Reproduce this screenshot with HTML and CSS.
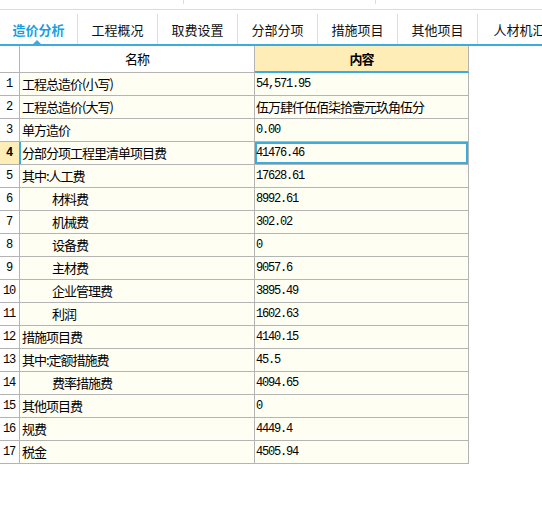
FILE: index.html
```html
<!DOCTYPE html>
<html lang="zh-CN">
<head>
<meta charset="utf-8">
<title>造价分析</title>
<link rel="stylesheet" href="styles.css">
</head>
<body>
<div class="topbar">
  <div class="tick tick-a"></div>
  <div class="tick tick-b"></div>
</div>
<nav class="tabs">
  <div class="tab tab-first active">造价分析</div>
  <div class="tab">工程概况</div>
  <div class="tab">取费设置</div>
  <div class="tab">分部分项</div>
  <div class="tab">措施项目</div>
  <div class="tab">其他项目</div>
  <div class="tab tab-last">人材机汇总</div>
</nav>
<div class="grid">
  <div class="cell hd hd-no"></div>
  <div class="cell hd hd-name">名称</div>
  <div class="cell hd hd-val">内容</div>

  <div class="cell no num">1</div><div class="cell name">工程总造价(小写)</div><div class="cell val num">54,571.95</div>
  <div class="cell no num">2</div><div class="cell name">工程总造价(大写)</div><div class="cell val">伍万肆仟伍佰柒拾壹元玖角伍分</div>
  <div class="cell no num">3</div><div class="cell name">单方造价</div><div class="cell val num">0.00</div>
  <div class="cell no num sel-no">4</div><div class="cell name sel-name">分部分项工程里清单项目费</div><div class="cell val num sel-val">41476.46</div>
  <div class="cell no num">5</div><div class="cell name">其中:人工费</div><div class="cell val num">17628.61</div>
  <div class="cell no num">6</div><div class="cell name indent">材料费</div><div class="cell val num">8992.61</div>
  <div class="cell no num">7</div><div class="cell name indent">机械费</div><div class="cell val num">302.02</div>
  <div class="cell no num">8</div><div class="cell name indent">设备费</div><div class="cell val num">0</div>
  <div class="cell no num">9</div><div class="cell name indent">主材费</div><div class="cell val num">9057.6</div>
  <div class="cell no num">10</div><div class="cell name indent">企业管理费</div><div class="cell val num">3895.49</div>
  <div class="cell no num">11</div><div class="cell name indent">利润</div><div class="cell val num">1602.63</div>
  <div class="cell no num">12</div><div class="cell name">措施项目费</div><div class="cell val num">4140.15</div>
  <div class="cell no num">13</div><div class="cell name">其中:定额措施费</div><div class="cell val num">45.5</div>
  <div class="cell no num">14</div><div class="cell name indent">费率措施费</div><div class="cell val num">4094.65</div>
  <div class="cell no num">15</div><div class="cell name">其他项目费</div><div class="cell val num">0</div>
  <div class="cell no num">16</div><div class="cell name">规费</div><div class="cell val num">4449.4</div>
  <div class="cell no num">17</div><div class="cell name">税金</div><div class="cell val num">4505.94</div>
</div>
</body>
</html>
```
FILE: styles.css
```css
* { box-sizing: border-box; }
html, body { margin: 0; padding: 0; background: #ffffff; }
body {
  width: 542px;
  overflow: hidden;
  font-family: "Noto Sans CJK SC", "Noto Sans", sans-serif;
  color: #000;
}

.topbar {
  display: flex;
  height: 10px;
  border-bottom: 1px solid #dcdcdc;
}
.tick { height: 4px; border-right: 1px solid #dcdcdc; }
.tick-a { width: 184px; }
.tick-b { width: 192px; }

.tabs {
  display: flex;
  height: 36px;
  border-bottom: 2px solid #3cacdc;
  overflow: hidden;
}
.tab {
  position: relative;
  flex: 0 0 80px;
  margin-top: 4px;
  border-right: 1px solid #dddddd;
  display: flex;
  align-items: center;
  justify-content: center;
  font-size: 13px;
  color: #111;
  white-space: nowrap;
}
.tab-first { flex-basis: 78px; }
.tab-last { flex-basis: 96px; border-right: none; }
.tab.active { color: #1a9fe2; font-weight: bold; }
.tab.active::after {
  content: "";
  position: absolute;
  left: 33px;
  bottom: 0;
  width: 0;
  height: 0;
  border-left: 4px solid transparent;
  border-right: 4px solid transparent;
  border-bottom: 4px solid #3cacdc;
}

.grid {
  display: grid;
  grid-template-columns: 20px 235px 214px;
  width: 469px;
}
.cell {
  height: 23px;
  border-right: 1px solid #b4b4b4;
  border-bottom: 1px solid #b4b4b4;
  font-size: 13px;
  letter-spacing: -1px;
  line-height: 22px;
  white-space: nowrap;
  overflow: hidden;
}
.hd {
  height: 27px;
  line-height: 26px;
  background: #ffffff;
  text-align: center;
}
.hd-val {
  background: #ffedb8;
  font-weight: bold;
  border-bottom: 2px solid #3cacdc;
}
.no {
  background: #ffffff;
  text-align: center;
  padding-right: 1px;
}
.name { background: #fffef3; padding-left: 2px; }
.val { background: #fffef3; padding-left: 1px; }
.indent { padding-left: 32px; }

.num {
  font-family: "Liberation Mono", monospace;
  font-size: 12px;
  letter-spacing: -1.2px;
}

.sel-no {
  background: #ffedb8;
  font-weight: bold;
  border-right-color: #3cacdc;
}
.sel-name { box-shadow: inset 1px 0 0 #3cacdc; }
.sel-val { box-shadow: inset 0 0 0 2px #3cacdc; }
```
